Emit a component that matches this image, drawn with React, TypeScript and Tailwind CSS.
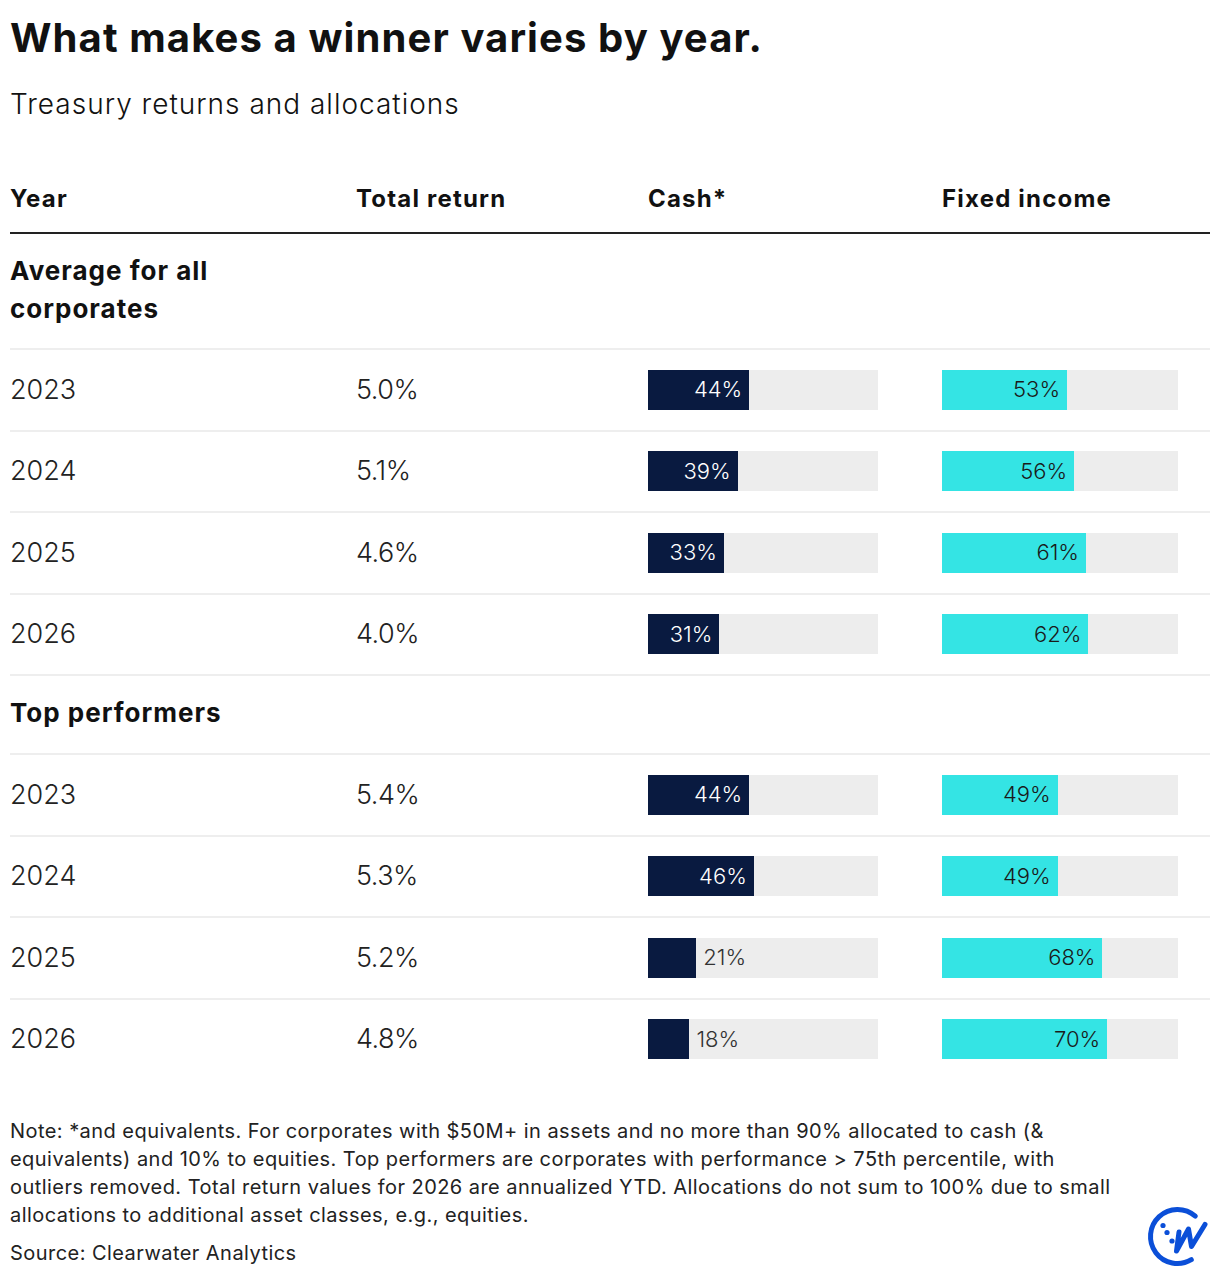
import React from 'react';

type Row = { year: string; total: string; cash: number; fixed: number };

const average: Row[] = [
  { year: '2023', total: '5.0%', cash: 44, fixed: 53 },
  { year: '2024', total: '5.1%', cash: 39, fixed: 56 },
  { year: '2025', total: '4.6%', cash: 33, fixed: 61 },
  { year: '2026', total: '4.0%', cash: 31, fixed: 62 },
];

const top: Row[] = [
  { year: '2023', total: '5.4%', cash: 44, fixed: 49 },
  { year: '2024', total: '5.3%', cash: 46, fixed: 49 },
  { year: '2025', total: '5.2%', cash: 21, fixed: 68 },
  { year: '2026', total: '4.8%', cash: 18, fixed: 70 },
];

const head = "font-['Inter',sans-serif]";
const num = "font-['Inter',sans-serif] font-light";

const Bar: React.FC<{ value: number; width: string; fill: string; text: string }> = ({ value, width, fill, text }) => {
  const inside = value >= 30;
  return (
    <div className={`flex h-10 ${width} bg-[#ededed]`}>
      <div className={`flex h-full items-center justify-end ${fill}`} style={{ width: `${value}%` }}>
        {inside && <span className={`${num} pr-[7px] text-[22px] ${text}`}>{value}%</span>}
      </div>
      {!inside && <span className={`${num} flex items-center pl-[7px] text-[22px] text-[#333]`}>{value}%</span>}
    </div>
  );
};

const DataRow: React.FC<{ row: Row }> = ({ row }) => (
  <div className="grid h-[81.5px] grid-cols-[346px_292px_294px_1fr] items-center border-t-2 border-[#eeeeee] text-[#222]">
    <div className={`${num} text-[27px]`}>{row.year}</div>
    <div className={`${num} text-[27px] tracking-[-0.5px]`}>{row.total}</div>
    <Bar value={row.cash} width="w-[230px]" fill="bg-[#091a40]" text="text-white" />
    <Bar value={row.fixed} width="w-[236px]" fill="bg-[#34e4e4]" text="text-[#1a1a1a]" />
  </div>
);

export default function App() {
  return (
    <div className="w-[1220px] bg-white px-[10px] text-[#111]">
      <h1 className={`${head} pt-[14px] text-[40px] font-bold leading-[48px] tracking-[1.1px]`}>
        What makes a winner varies by year.
      </h1>
      <p className={`${head} mt-[24px] text-[28px] font-light leading-[36px] tracking-[1px]`}>
        Treasury returns and allocations
      </p>

      <div
        className={`${head} mt-[61px] grid grid-cols-[346px_292px_294px_1fr] pb-[17px] text-[24px] font-bold leading-[32px] tracking-[1.2px]`}
      >
        <div>Year</div>
        <div>Total return</div>
        <div>Cash*</div>
        <div>Fixed income</div>
      </div>
      <div className="h-[2px] bg-[#222]" />

      <div className={`${head} pt-[18px] pb-[20px] text-[26px] font-bold leading-[38px] tracking-[1px]`}>
        Average for all
        <br />
        corporates
      </div>
      {average.map((r) => (
        <DataRow key={'a' + r.year} row={r} />
      ))}

      <div
        className={`${head} flex h-[79px] items-center border-t-2 border-[#eeeeee] pb-[4px] text-[26px] font-bold tracking-[1px]`}
      >
        Top performers
      </div>
      {top.map((r) => (
        <DataRow key={'t' + r.year} row={r} />
      ))}

      <div className="mt-[38px] flex items-end justify-between pb-[10px]">
        <div className={`${head} text-[20px] leading-[28px] tracking-[0.45px] text-[#222]`}>
          <p>
            Note: *and equivalents. For corporates with $50M+ in assets and no more than 90% allocated to cash (&amp;
            <br />
            equivalents) and 10% to equities. Top performers are corporates with performance &gt; 75th percentile, with
            <br />
            outliers removed. Total return values for 2026 are annualized YTD. Allocations do not sum to 100% due to small
            <br />
            allocations to additional asset classes, e.g., equities.
          </p>
          <p className="mt-[10px]">Source: Clearwater Analytics</p>
        </div>
        <svg width="64" height="64" viewBox="0 0 64 64" className="-mb-[2px] shrink-0" fill="none">
          <path d="M49.3 11.2 A27 27 0 1 0 45.3 54.7" stroke="#0b4fd8" strokeWidth="5" strokeLinecap="round" />
          <circle cx="17" cy="20.5" r="2.6" fill="#0b4fd8" />
          <circle cx="21" cy="27.5" r="2.6" fill="#0b4fd8" />
          <circle cx="26" cy="36" r="2.6" fill="#0b4fd8" />
          <path
            d="M33 27 L30.5 46 L42.5 24 L45.5 41.5 L59 19.5"
            stroke="#0b4fd8"
            strokeWidth="5"
            strokeLinecap="round"
            strokeLinejoin="round"
          />
        </svg>
      </div>
    </div>
  );
}
